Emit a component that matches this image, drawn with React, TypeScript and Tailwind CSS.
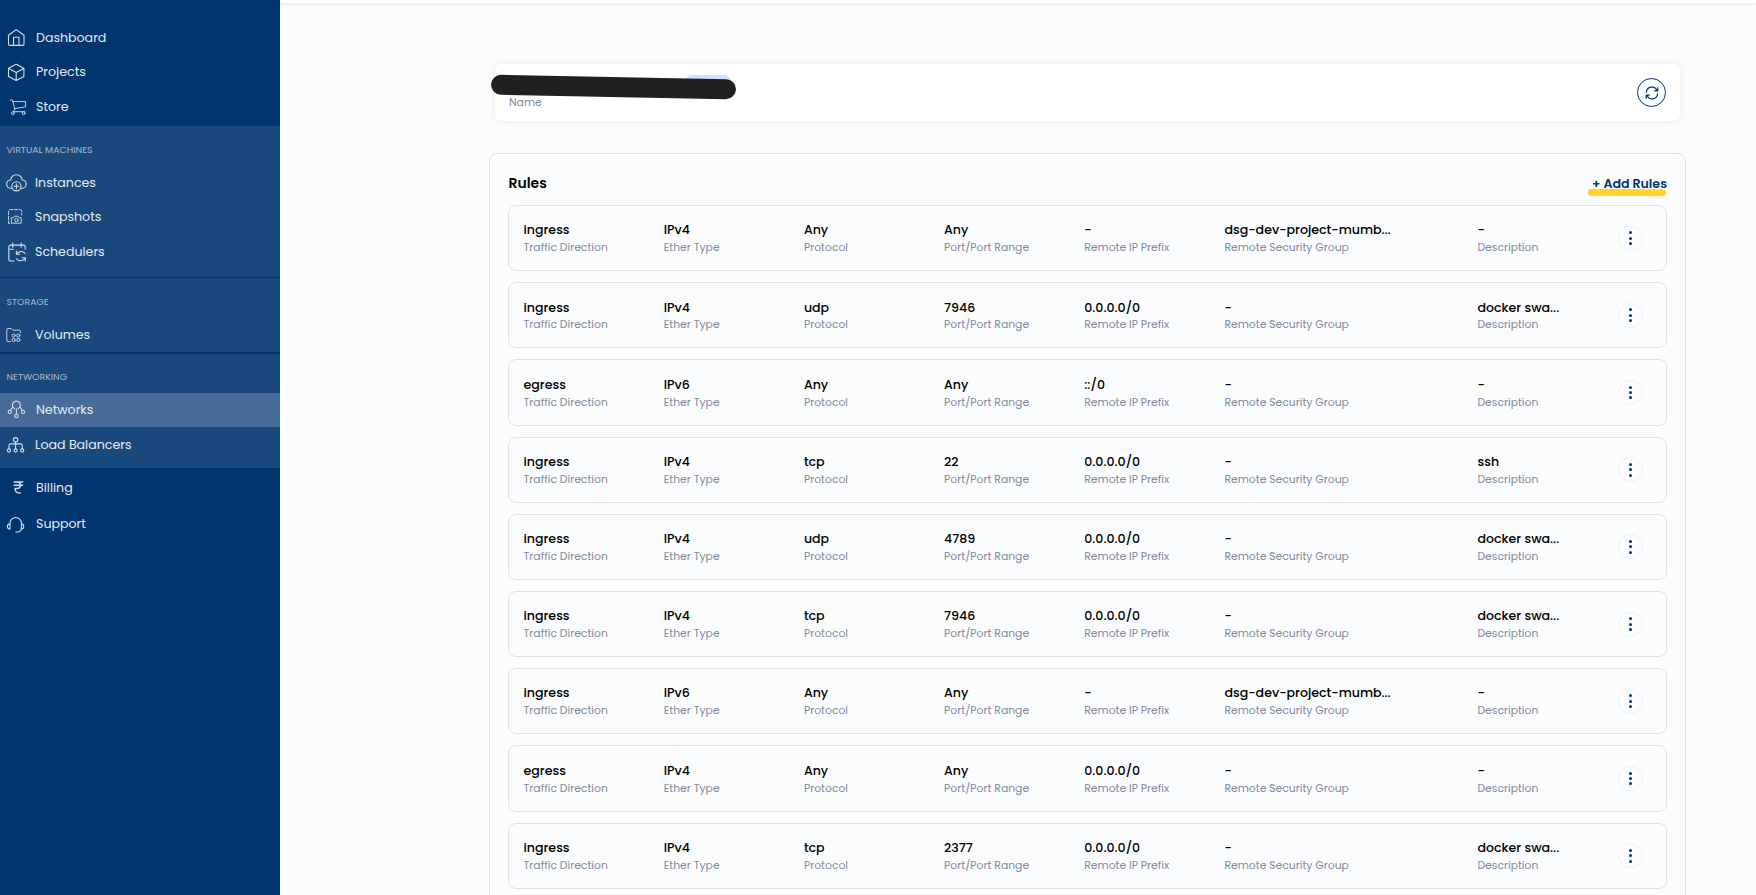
import type { ReactNode } from 'react';

const rules = [
  ['ingress', 'IPv4', 'Any', 'Any', '-', 'dsg-dev-project-mumb...', '-'],
  ['ingress', 'IPv4', 'udp', '7946', '0.0.0.0/0', '-', 'docker swa...'],
  ['egress', 'IPv6', 'Any', 'Any', '::/0', '-', '-'],
  ['ingress', 'IPv4', 'tcp', '22', '0.0.0.0/0', '-', 'ssh'],
  ['ingress', 'IPv4', 'udp', '4789', '0.0.0.0/0', '-', 'docker swa...'],
  ['ingress', 'IPv4', 'tcp', '7946', '0.0.0.0/0', '-', 'docker swa...'],
  ['ingress', 'IPv6', 'Any', 'Any', '-', 'dsg-dev-project-mumb...', '-'],
  ['egress', 'IPv4', 'Any', 'Any', '0.0.0.0/0', '-', '-'],
  ['ingress', 'IPv4', 'tcp', '2377', '0.0.0.0/0', '-', 'docker swa...'],
];

const labels = [
  'Traffic Direction',
  'Ether Type',
  'Protocol',
  'Port/Port Range',
  'Remote IP Prefix',
  'Remote Security Group',
  'Description',
];

function Icon({ children }: { children: ReactNode }) {
  return (
    <svg
      viewBox="0 0 20 20"
      fill="none"
      stroke="currentColor"
      strokeWidth="1.1"
      strokeLinecap="round"
      strokeLinejoin="round"
      className="w-5 h-5 shrink-0 overflow-visible"
    >
      {children}
    </svg>
  );
}

const HomeIcon = () => (
  <Icon>
    <path d="M2.5 7.3 10.2 1.6l7.8 5.7V16a1.4 1.4 0 0 1-1.4 1.4H3.9A1.4 1.4 0 0 1 2.5 16zM7.5 17.4V9.3h5.5v8.1" />
  </Icon>
);

const BoxIcon = () => (
  <Icon>
    <path d="M10.2 2.2 17.9 6.3v8.1L10.2 18.5 2.5 14.4V6.3zM2.7 6.4l7.5 4.2 7.5-4.2M10.2 10.6v7.7" />
  </Icon>
);

const CartIcon = () => (
  <Icon>
    <path strokeWidth="0.9" d="M4.2 3h2.3l2.4 9.5-1.7 2.2h11.7M6.9 4.6h12.7v5.2L8.7 11.6" />
    <circle strokeWidth="0.9" cx="6.9" cy="16.2" r="1.4" />
    <circle strokeWidth="0.9" cx="17.6" cy="16.2" r="1.4" />
  </Icon>
);

const CloudIcon = () => (
  <Icon>
    <path d="M6.4 15.2h-.6a4.1 4.1 0 0 1-.1-8.2a5.7 5.3 0 0 1 11.4 0a4.1 4.1 0 0 1-.1 8.2h-.6" />
    <circle cx="11.4" cy="13.3" r="4.6" />
    <path d="M11.4 10.9v4.8M9 13.3h4.8" />
  </Icon>
);

const SnapshotIcon = () => (
  <Icon>
    <path strokeWidth="0.9" strokeDasharray="3.4 1.6" d="M4.7 16.4H3.5V4.4a1.8 1.8 0 0 1 1.8-1.8h9.6a1.8 1.8 0 0 1 1.8 1.8v3.6" />
    <path strokeWidth="0.9" d="M6.7 10.7h1.9l.9-1.5h3.6l.9 1.5h2.2v5.5H6.7z" />
    <circle strokeWidth="0.9" cx="11.4" cy="13.1" r="1.7" />
  </Icon>
);

const SchedulerIcon = () => (
  <Icon>
    <path d="M9 19H5.400a1.600 1.600 0 0 1-1.600-1.600V4.700a1.600 1.600 0 0 1 1.600-1.600h13.200a1.600 1.600 0 0 1 1.600 1.600v2.200M3.800 7.300h4.600M7.800 1v4.200M16.200 1v4.200" />
    <path d="M11.400 9.100v3.200h3.200M11.700 11.900a5.300 5.300 0 0 1 8.300-.6M20.300 19v-3.200h-3.200M20 16.200a5.300 5.300 0 0 1-8.500.7" />
  </Icon>
);

const VolumeIcon = () => (
  <Icon>
    <path strokeWidth="0.9" d="M5.600 16.600H3.100a1.300 1.300 0 0 1-1.300-1.300V4.800a1.300 1.300 0 0 1 1.300-1.300h3.100l1.600 1.700h6.500a1.300 1.300 0 0 1 1.300 1.300v1.200" />
    <circle strokeWidth="0.9" cx="8.600" cy="10.600" r="1.600" />
    <circle strokeWidth="0.9" cx="13.300" cy="10.600" r="1.600" />
    <circle strokeWidth="0.9" cx="8.600" cy="15" r="1.600" />
    <circle strokeWidth="0.9" cx="13.300" cy="15" r="1.600" />
  </Icon>
);

const NetworkIcon = () => (
  <Icon>
    <path d="M8.6 8.7a4 4 0 1 1 3.6 0M10.4 8.9v5.3M7 6.7l-2.500 3.700M13.800 6.700l2.500 3.700" />
    <circle cx="3.800" cy="11.900" r="1.600" />
    <circle cx="17" cy="11.900" r="1.600" />
    <circle cx="10.400" cy="16" r="1.700" />
  </Icon>
);

const BalancerIcon = () => (
  <Icon>
    <circle cx="10.6" cy="4.8" r="2.2" />
    <path d="M10.6 7v6.7M4 13.7v-3.2a1.6 1.6 0 0 1 1.6-1.6h10a1.6 1.6 0 0 1 1.6 1.6v3.2" />
    <circle cx="4" cy="15.5" r="1.6" />
    <circle cx="10.6" cy="15.5" r="1.6" />
    <circle cx="17.2" cy="15.5" r="1.6" />
  </Icon>
);

const RupeeIcon = () => (
  <Icon>
    <path
      strokeWidth="1.5"
      strokeLinecap="butt"
      d="M7.6 4.1h9.6M7.6 7.3h9.6M11 4.1c4.6 0 4.6 6.5 0 6.5H9.1c0 3.2 1 4.5 5.6 4.5"
    />
  </Icon>
);

const HeadsetIcon = () => (
  <Icon>
    <path d="M4 10.2v-1a5.7 5.7 0 0 1 11.4 0v4.9c0 2.4-1.2 3.9-3.8 3.9H9.8M4 9.9c-2 .2-2.6 1.4-2.6 2.5s.6 2.5 2.6 2.6zM15.4 9.9c1.9.2 2.3 1.4 2.3 2.5s-.4 2.4-2.3 2.6" />
  </Icon>
);

function NavItem({ icon, label, className }: { icon: ReactNode; label: string; className: string }) {
  return (
    <a className={`flex items-center text-[12.6px] text-[#e4ebf3] ${className}`}>
      <span className="w-5 mr-2.5 text-[#d3dfeb]">{icon}</span>
      <span className="leading-5 whitespace-nowrap">{label}</span>
    </a>
  );
}

function NavHeading({ children }: { children: ReactNode }) {
  return <h6 className="h-[17px] pl-[6.5px] text-[9.4px] leading-[18px] text-[#a9bacd]">{children}</h6>;
}

function Sidebar() {
  return (
    <aside className="w-[280px] h-full shrink-0 bg-[#00356e]">
      <div className="h-[126px] pt-[21px]">
        <NavItem icon={<HomeIcon />} label="Dashboard" className="h-[33px] pl-1.5" />
        <NavItem icon={<BoxIcon />} label="Projects" className="h-[35px] pl-1.5" />
        <NavItem icon={<CartIcon />} label="Store" className="h-[35px] pl-1.5" />
      </div>
      <div className="h-[151px] pt-[15px] bg-[#19487d]">
        <NavHeading>VIRTUAL MACHINES</NavHeading>
        <NavItem icon={<CloudIcon />} label="Instances" className="h-[34px] mt-2 pl-[5px]" />
        <NavItem icon={<SnapshotIcon />} label="Snapshots" className="h-[34px] pl-[5px]" />
        <NavItem icon={<SchedulerIcon />} label="Schedulers" className="h-[35px] pl-[5px]" />
      </div>
      <div className="h-[74px] mt-px pt-[15px] bg-[#19487d]">
        <NavHeading>STORAGE</NavHeading>
        <NavItem icon={<VolumeIcon />} label="Volumes" className="h-[34px] mt-2 pl-[5px]" />
      </div>
      <div className="h-[114px] mt-[2px] pt-[14px] bg-[#19487d]">
        <NavHeading>NETWORKING</NavHeading>
        <NavItem icon={<NetworkIcon />} label="Networks" className="h-[34px] mt-2 pl-1.5 bg-[#466b97]" />
        <NavItem icon={<BalancerIcon />} label="Load Balancers" className="h-[36px] pl-[5px]" />
      </div>
      <div className="pt-[2px]">
        <NavItem icon={<RupeeIcon />} label="Billing" className="h-[36px] pl-1.5" />
        <NavItem icon={<HeadsetIcon />} label="Support" className="h-[36px] pl-1.5" />
      </div>
    </aside>
  );
}

function RuleRow({ values }: { values: string[] }) {
  return (
    <div className="h-[66.2px] mb-[11px] pl-[14.5px] pt-[14.35px] flex border border-[#e0e2e6] rounded-lg">
      <div className="grid content-start grid-cols-[140.2px_140.2px_140.2px_140.2px_140.2px_253px_140.2px]">
        {values.map((value, i) => (
          <div key={labels[i]}>
            <p className="text-[12.6px] leading-5 font-medium text-black whitespace-nowrap">{value}</p>
            <p className="-mt-[0.15px] text-[10.8px] leading-4 text-[#7f8a9c] whitespace-nowrap">{labels[i]}</p>
          </div>
        ))}
      </div>
      <button className="w-[25px] h-[25px] mt-[5.3px] flex flex-col items-center justify-center gap-[2.4px] border border-[#edf0f7] rounded-full">
        <span className="w-[3px] h-[3px] rounded-full bg-[#00356e]" />
        <span className="w-[3px] h-[3px] rounded-full bg-[#00356e]" />
        <span className="w-[3px] h-[3px] rounded-full bg-[#00356e]" />
      </button>
    </div>
  );
}

export default function App() {
  return (
    <div className="flex w-full h-[895px] overflow-hidden bg-[#fbfcfe] font-['Poppins','Inter',sans-serif]">
      <Sidebar />
      <main className="flex-1 min-w-0">
        <div className="h-[3px] bg-white shadow-[0_1px_4px_rgba(0,0,0,0.12)]" />

        <div className="relative w-[1185px] h-[57px] mt-[61px] ml-[215px] px-3.5 flex items-center justify-between bg-white rounded-md shadow-[0_0_8px_rgba(0,0,0,0.08)]">
          <p className="mt-[21px] text-[10.8px] leading-4 text-[#7f8a9c]">Name</p>
          <span className="absolute left-[190px] top-[11px] w-[46px] h-[14px] rounded-full bg-[#cfe2fc]" />
          <span className="absolute left-[-4.5px] top-[13px] w-[245px] h-[20px] rounded-full bg-[#202020] rotate-[1.1deg]" />
          <button className="w-[29px] h-[29px] flex items-center justify-center border border-[#00356e] rounded-full text-[#00356e]">
            <svg viewBox="0 0 14 14" fill="none" stroke="currentColor" strokeWidth="1.2" strokeLinecap="round" strokeLinejoin="round" className="w-3.5 h-3.5">
              <path d="M1.4 6.2A5.5 5.5 0 0 1 12 4.6M12.8 1.6v3.2H9.6M12.6 7.8A5.5 5.5 0 0 1 2 9.4M1.2 12.4V9.2h3.2" />
            </svg>
          </button>
        </div>

        <section className="w-[1197px] h-[800px] mt-8 ml-[209px] px-[18px] border border-[#e0e2e6] rounded-lg">
          <div className="relative h-[51px] pt-[8px] flex items-center justify-between">
            <h2 className="-mt-[2px] pl-[0.5px] text-sm font-semibold text-black">Rules</h2>
            <span className="absolute right-px top-[34.5px] w-[78px] h-[7px] rounded-full bg-[#ffd230] rotate-[0.5deg]" />
            <button className="relative mt-px text-[12.6px] font-semibold text-[#00356e]">+ Add Rules</button>
          </div>
          {rules.map((values, i) => (
            <RuleRow key={i} values={values} />
          ))}
        </section>
      </main>
    </div>
  );
}
